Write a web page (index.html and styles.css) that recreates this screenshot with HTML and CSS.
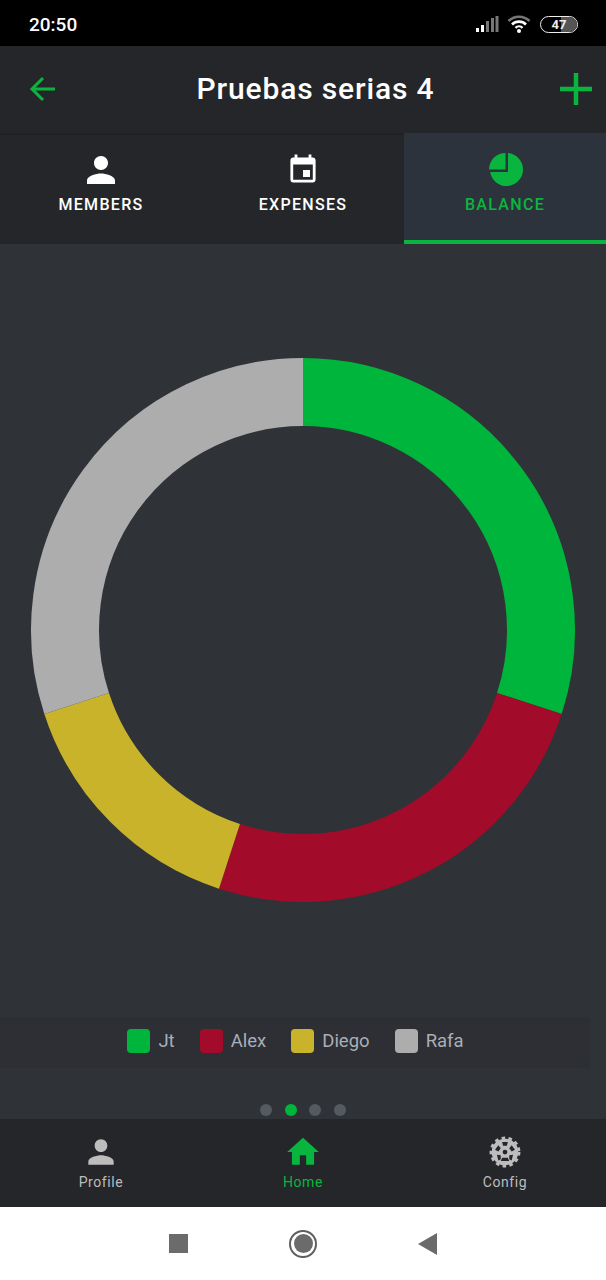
FILE: index.html
```html
<!DOCTYPE html>
<html lang="en">
<head>
    <meta charset="UTF-8">
    <meta name="viewport" content="width=device-width, initial-scale=1.0">
    <title>Pruebas serias 4</title>
    <link rel="stylesheet" href="styles.css">
</head>
<body>
    <div class="status-bar">
        <span class="clock">20:50</span>
        <div class="status-icons">
            <svg class="signal" viewBox="0 0 24 18" width="24" height="18">
                <rect x="1" y="13" width="3" height="4" fill="#fff"/>
                <rect x="6" y="10" width="3" height="7" fill="#fff"/>
                <rect x="11" y="6" width="3" height="11" fill="#777"/>
                <rect x="16" y="3" width="3" height="14" fill="#777"/>
                <rect x="20.500" y="1" width="3" height="16" fill="#777"/>
            </svg>
            <svg class="wifi" viewBox="0 0 24 20" width="24" height="20">
                <path d="M1.500 7 A15 15 0 0 1 22.500 7" fill="none" stroke="#777" stroke-width="2.600"/>
                <path d="M5 10.500 A10 10 0 0 1 19 10.500" fill="none" stroke="#fff" stroke-width="2.600"/>
                <path d="M8.500 13.800 A5 5 0 0 1 15.500 13.800" fill="none" stroke="#fff" stroke-width="2.400"/>
                <circle cx="12" cy="17" r="2" fill="#fff"/>
            </svg>
            <div class="battery"><span class="battery-level"></span><span class="battery-text">47</span></div>
        </div>
    </div>

    <header class="app-bar">
        <svg class="back" viewBox="0 0 28 28" width="28" height="28">
            <path d="M26 14H3M14 3L3 14l11 11" fill="none" stroke="#0ab53f" stroke-width="3"/>
        </svg>
        <h1>Pruebas serias 4</h1>
        <svg class="add" viewBox="0 0 32 36" width="32" height="36">
            <path d="M0 18h32M16 2v32" fill="none" stroke="#0ab53f" stroke-width="4.500"/>
        </svg>
    </header>

    <nav class="tabs">
        <div class="tab">
            <svg class="tab-icon" viewBox="0 0 24 24"><path d="M12 12c2.210 0 4-1.790 4-4s-1.790-4-4-4-4 1.790-4 4 1.790 4 4 4zm0 2c-2.670 0-8 1.340-8 4v2h16v-2c0-2.660-5.330-4-8-4z"/></svg>
            <span>MEMBERS</span>
        </div>
        <div class="tab">
            <svg class="tab-icon" viewBox="-3 -3 30 30"><path d="M17 12h-5v5h5v-5zM16 1v2H8V1H6v2H5c-1.110 0-1.990.9-1.990 2L3 19c0 1.100.89 2 2 2h14c1.100 0 2-.9 2-2V5c0-1.100-.9-2-2-2h-1V1h-2zm3 18H5V8h14v11z"/></svg>
            <span>EXPENSES</span>
        </div>
        <div class="tab tab-active">
            <svg class="tab-icon" viewBox="0 0 42 42">
                <path d="M21.500 4V20.500H5A16.500 16.500 0 0 1 21.500 4z"/>
                <path d="M24 4.100A16.500 16.500 0 1 1 6.200 23H24z"/>
            </svg>
            <span>BALANCE</span>
        </div>
    </nav>

    <main class="content">
        <div class="chart">
            <svg viewBox="0 0 546 546" width="546" height="546">
                <g fill="none" stroke-width="68">
                    <path d="M273 35 A238 238 0 0 1 499.350 346.550" stroke="#00b53c"/>
                    <path d="M499.350 346.550 A238 238 0 0 1 199.450 499.350" stroke="#a20b29"/>
                    <path d="M199.450 499.350 A238 238 0 0 1 46.650 346.550" stroke="#c8b32b"/>
                    <path d="M46.650 346.550 A238 238 0 0 1 273 35" stroke="#adadad"/>
                </g>
            </svg>
        </div>
        <div class="legend">
            <div class="legend-item"><i class="swatch swatch-green"></i>Jt</div>
            <div class="legend-item"><i class="swatch swatch-red"></i>Alex</div>
            <div class="legend-item"><i class="swatch swatch-yellow"></i>Diego</div>
            <div class="legend-item"><i class="swatch swatch-grey"></i>Rafa</div>
        </div>
        <div class="pager">
            <i class="dot"></i>
            <i class="dot dot-active"></i>
            <i class="dot"></i>
            <i class="dot"></i>
        </div>
    </main>

    <nav class="bottom-nav">
        <div class="nav-item">
            <svg class="nav-icon" viewBox="0 0 24 24"><path d="M12 12c2.210 0 4-1.790 4-4s-1.790-4-4-4-4 1.790-4 4 1.790 4 4 4zm0 2c-2.670 0-8 1.340-8 4v2h16v-2c0-2.660-5.330-4-8-4z"/></svg>
            <span>Profile</span>
        </div>
        <div class="nav-item nav-active">
            <svg class="nav-icon" viewBox="0 0 24 24"><path d="M10 20v-6h4v6h5v-8h3L12 3 2 12h3v8z"/></svg>
            <span>Home</span>
        </div>
        <div class="nav-item">
            <svg class="nav-icon" viewBox="-2 -2 40 40">
                <circle cx="18" cy="18" r="14.500" fill="none" stroke="#bdbdbd" stroke-width="3.500" stroke-dasharray="3.700 3.450"/>
                <path fill-rule="evenodd" d="M18 4a14 14 0 1 0 0 28a14 14 0 1 0 0-28zM18 15.500a2.500 2.500 0 1 0 0 5a2.500 2.500 0 1 0 0-5zM15 7.500h6l-1 4h-4zM25 11l3.500 4.500-3.500 2-2.500-3.500zM11 11l2.500 3-2.500 3.500-3.500-2zM9.500 21l4 .5 0 4-2.500 1.500zM26.500 21l-4 .5 0 4 2.500 1.500zM15 24h6l1.500 3.500h-9z"/>
            </svg>
            <span>Config</span>
        </div>
    </nav>

    <div class="system-bar">
        <span class="sys-square"></span>
        <span class="sys-circle"><span></span></span>
        <span class="sys-back"></span>
    </div>
</body>
</html>
```

FILE: styles.css
```css
* {
    box-sizing: border-box;
}
body {
    font-family: Roboto, "Liberation Sans", sans-serif;
    margin: 0;
    padding: 0;
    width: 606px;
    height: 1280px;
    overflow: hidden;
    display: flex;
    flex-direction: column;
    background-color: #2f3338;
}
.status-bar {
    height: 46px;
    background-color: #000;
    color: #fff;
    display: flex;
    align-items: center;
    justify-content: space-between;
    padding: 3px 28px 0 29px;
}
.clock {
    font-size: 19px;
    font-weight: 500;
}
.status-icons {
    display: flex;
    align-items: center;
    gap: 8px;
    margin-top: -1px;
}
.battery {
    position: relative;
    width: 38px;
    height: 17px;
    border: 1.500px solid #eee;
    border-radius: 9px;
    overflow: hidden;
    display: flex;
    align-items: center;
    justify-content: center;
    margin-left: 1px;
}
.battery-level {
    position: absolute;
    top: 0;
    bottom: 0;
    right: 0;
    width: 16px;
    background-color: #555;
}
.battery-text {
    position: relative;
    font-size: 13px;
    font-weight: 700;
    color: #eee;
}
.app-bar {
    height: 87px;
    background-color: #24262a;
    display: flex;
    align-items: center;
    justify-content: space-between;
    padding: 0 14px 2px 29px;
}
.app-bar h1 {
    margin: 0 0 0 14px;
    font-size: 30px;
    font-weight: 500;
    color: #fff;
    letter-spacing: 0.85px;
}
.tabs {
    height: 111px;
    display: flex;
    background-color: #24262a;
    box-shadow: inset 0 2px 0 #1f2125;
}
.tab {
    flex: 1;
    display: flex;
    flex-direction: column;
    align-items: center;
    padding-top: 16px;
    color: #fff;
    fill: #fff;
    font-size: 16px;
    font-weight: 500;
    letter-spacing: 1.300px;
}
.tab-icon {
    width: 42px;
    height: 42px;
    margin-bottom: 4px;
}
.tab-active {
    background-color: #2d333c;
    border-bottom: 4px solid #0ab53f;
    color: #0ab53f;
    fill: #0ab53f;
}
.content {
    height: 875px;
    display: flex;
    flex-direction: column;
    background-color: #2f3338;
}
.chart {
    display: flex;
    justify-content: center;
    padding-top: 113px;
    height: 773px;
}
.legend {
    width: 590px;
    height: 51px;
    background-color: #2d2f34;
    display: flex;
    align-items: center;
    justify-content: center;
    gap: 25px;
    color: #a9aeb8;
    font-size: 18.500px;
    padding: 0 0 4px 1px;
}
.legend-item {
    display: flex;
    align-items: center;
    gap: 8px;
}
.swatch {
    width: 23px;
    height: 24px;
    border-radius: 4px;
}
.swatch-green {
    background-color: #00b53c;
}
.swatch-red {
    background-color: #a20b29;
}
.swatch-yellow {
    background-color: #c8b32b;
}
.swatch-grey {
    background-color: #adadad;
}
.pager {
    display: flex;
    justify-content: center;
    gap: 12.500px;
    padding-top: 36px;
}
.dot {
    width: 12px;
    height: 12px;
    border-radius: 50%;
    background-color: #555960;
}
.dot-active {
    background-color: #00b53c;
}
.bottom-nav {
    height: 88px;
    background-color: #24262a;
    display: flex;
}
.nav-item {
    flex: 1;
    display: flex;
    flex-direction: column;
    align-items: center;
    padding-top: 14px;
    color: #bdbdbd;
    fill: #bdbdbd;
    font-size: 14px;
    letter-spacing: 0.6px;
}
.nav-icon {
    width: 38px;
    height: 38px;
    margin-bottom: 3px;
}
.nav-active {
    color: #0ab53f;
    fill: #0ab53f;
}
.system-bar {
    height: 73px;
    background-color: #fff;
    display: flex;
    align-items: center;
    justify-content: center;
    gap: 101px;
}
.sys-square {
    width: 19px;
    height: 19px;
    background-color: #6b6b6b;
}
.sys-circle {
    width: 28px;
    height: 28px;
    border: 2.500px solid #5f5f5f;
    border-radius: 50%;
    display: flex;
    align-items: center;
    justify-content: center;
}
.sys-circle span {
    width: 19px;
    height: 19px;
    border-radius: 50%;
    background-color: #6b6b6b;
}
.sys-back {
    width: 0;
    height: 0;
    border-top: 11px solid transparent;
    border-bottom: 11px solid transparent;
    border-right: 19px solid #6b6b6b;
}
```
